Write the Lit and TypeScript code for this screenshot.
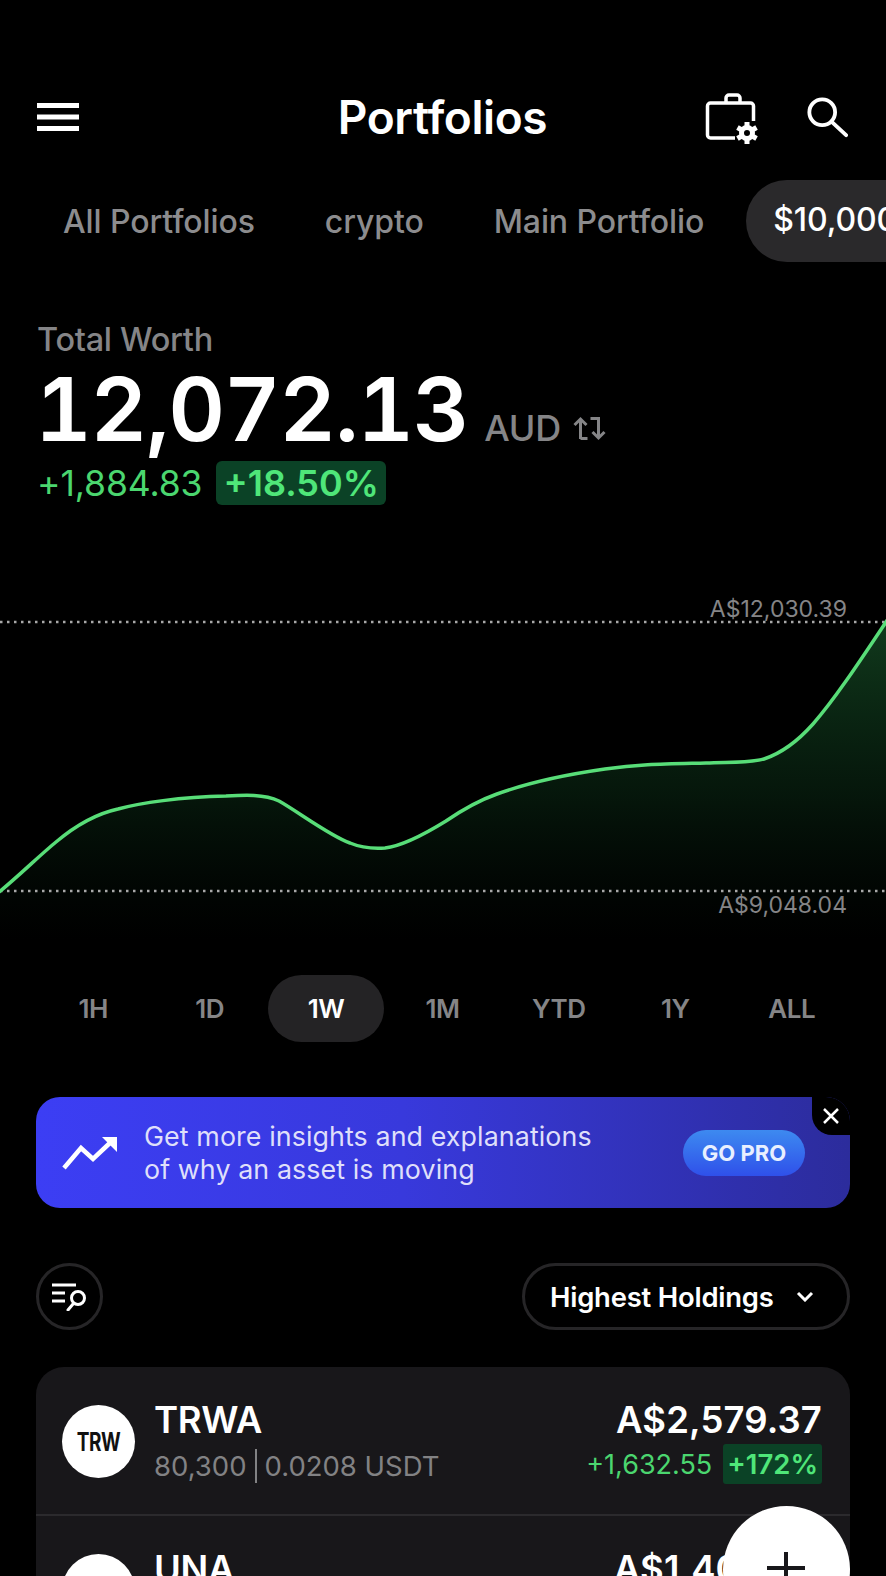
import { LitElement, html, css, svg } from "lit";
import { customElement } from "lit/decorators.js";

const CURVE = "M-2 892 C20 874 40 854 56 841 C75 825 95 813 118 808 C140 802 180 796 226 795 C245 794 264 793 279 800 C297 810 330 835 350 842 C362 847 372 848 385 847 C402 845 425 833 446 820 C465 807 480 799 497 793 C530 781 570 773 605 768 C640 763 665 763 706 762 C730 761 752 762 764 758 C782 752 797 741 813 723 C835 698 860 660 888 618";

@customElement("app-root")
export class AppRoot extends LitElement {
  static styles = css`
    :host { display: block; width: 886px; height: 1576px; overflow: hidden; background: #000; color: #fff; font-family: Inter, "Liberation Sans", sans-serif; position: relative; }
    .header { display: grid; grid-template-columns: 1fr auto 1fr; align-items: center; height: 74px; padding: 80px 38px 0 37px; }
    .title { font-size: 46px; font-weight: 600; letter-spacing: -0.4px; line-height: 74px; }
    .header-icons { display: flex; justify-content: flex-end; align-items: center; gap: 43px; }
    .bag { margin-top: 6px; }
    svg { display: block; }
    .tabs { display: flex; align-items: center; height: 82px; margin-top: 26px; padding-left: 63px; white-space: nowrap; overflow: hidden; font-size: 32px; font-weight: 500; letter-spacing: -0.1px; color: #8c8c8e; }
    .tabs span { margin-right: 70px; }
    .tabs .on { margin: 0 0 0 -28px; padding: 0 27px; height: 82px; line-height: 80px; border-radius: 41px; background: #2a292b; color: #fff; }
    .worth { padding: 60px 0 0 37px; }
    .worth-label { font-size: 32.5px; font-weight: 500; line-height: 36px; color: #858587; letter-spacing: -0.3px; }
    .worth-row { display: flex; align-items: baseline; height: 84px; padding-top: 9px; }
    .amount { margin-left: -2px; font-size: 88px; font-weight: 600; line-height: 84px; letter-spacing: -1.4px; font-variant-numeric: tabular-nums; }
    .cur { margin-left: 16px; font-size: 36px; font-weight: 500; color: #858587; letter-spacing: -0.2px; }
    .swap { margin-left: 11px; }
    .gain-row { display: flex; align-items: center; gap: 14px; margin-top: 10px; }
    .gain { font-size: 35.5px; color: #4bd66f; letter-spacing: -0.1px; }
    .badge { display: flex; align-items: center; height: 44px; padding: 0 7px; border-radius: 6px; background: #0b4226; font-size: 36px; font-weight: 600; color: #4fe679; }
    .chart { position: relative; height: 386px; margin-top: 84px; }
    .chart svg { position: absolute; left: 0; top: 0; }
    .chart-label { position: absolute; right: 39px; font-size: 23px; line-height: 26px; color: #858587; }
    .high { top: 7px; }
    .low { top: 303px; }
    .ranges { display: grid; grid-template-columns: repeat(7, 1fr); margin: 0 36px 0 35px; height: 67px; align-items: center; text-align: center; font-size: 26px; font-weight: 600; color: #858587; letter-spacing: -0.4px; }
    .ranges div { height: 67px; line-height: 67px; border-radius: 34px; }
    .ranges .on { background: #242325; color: #fff; }
    .banner { position: relative; display: flex; align-items: center; height: 111px; margin: 55px 36px 0; padding: 0 45px 0 26px; border-radius: 24px; background: linear-gradient(90deg, #3c3ef4 0%, #3839dc 45%, #2c2c9c 100%); overflow: hidden; }
    .banner-text { margin-left: 26px; flex: 1; font-size: 26.8px; line-height: 33px; color: #dfdffa; letter-spacing: 0.1px; }
    .go { width: 122px; height: 46px; line-height: 46px; text-align: center; border-radius: 23px; background: linear-gradient(180deg, #3d8af0, #2f50ea); font-size: 22px; font-weight: 700; color: #e8f0ff; }
    .close { position: absolute; right: 0; top: 0; width: 38px; height: 38px; border-bottom-left-radius: 20px; background: #000; display: flex; align-items: center; justify-content: center; }
    .controls { display: flex; justify-content: space-between; align-items: center; margin: 55px 36px 0; }
    .filter { width: 67px; height: 67px; box-sizing: border-box; border: 3px solid #262527; border-radius: 50%; display: flex; align-items: center; justify-content: center; }
    .sort { display: flex; align-items: center; height: 67px; box-sizing: border-box; width: 328px; padding-left: 25px; border: 3px solid #262527; border-radius: 34px; font-size: 27.4px; font-weight: 600; letter-spacing: -0.2px; gap: 22px; }
    .card { margin: 37px 36px 0; border-radius: 28px 28px 0 0; background: #18171a; height: 300px; }
    .row { display: flex; align-items: flex-start; height: 149px; padding: 38px 28px 0 26px; box-sizing: border-box; border-bottom: 2px solid #2b2a2d; }
    .row.last { border-bottom: 0; }
    .logo { width: 73px; height: 73px; border-radius: 50%; background: #fff; color: #111; display: flex; align-items: center; justify-content: center; font-size: 25px; font-weight: 700; flex: none; }
    .logo span { display: block; transform: scaleX(0.76); letter-spacing: -0.6px; }
    .info { margin-left: 19px; flex: 1; margin-top: -6px; }
    .sym { font-size: 36.5px; font-weight: 600; line-height: 42px; letter-spacing: -0.3px; }
    .sub { display: flex; align-items: center; margin-top: 7px; font-size: 27.5px; line-height: 36px; color: #828284; }
    .sep { width: 2px; height: 34px; margin: 0 8px; background: #828284; }
    .vals { text-align: right; margin-top: -6px; }
    .val { font-size: 36.5px; font-weight: 600; line-height: 42px; letter-spacing: 0.1px; }
    .chg { display: flex; justify-content: flex-end; align-items: center; gap: 11px; margin-top: 3px; }
    .chg-v { font-size: 27px; color: #4bd66f; }
    .chg-b { display: flex; align-items: center; height: 40px; padding: 0 4px; background: #0b4226; font-size: 27.5px; font-weight: 600; color: #4fe679; border-radius: 3px; }
    .fab { position: absolute; left: 723px; top: 1506px; width: 127px; height: 127px; border-radius: 50%; background: #fff; }
    .fab::before { content: ""; position: absolute; left: 44px; top: 60px; width: 38px; height: 4px; background: #18171a; }
    .fab::after { content: ""; position: absolute; left: 61px; top: 46px; width: 4px; height: 38px; background: #18171a; }
  `;

  private row(logo: string, sym: string, sub1: string, sub2: string, val: string, chg: string, pct: string, last = false) {
    return html`<div class="row ${last ? "last" : ""}">
      <div class="logo"><span>${logo}</span></div>
      <div class="info"><div class="sym">${sym}</div>
        <div class="sub"><span>${sub1}</span><i class="sep"></i><span>${sub2}</span></div></div>
      <div class="vals"><div class="val">${val}</div>
        <div class="chg"><span class="chg-v">${chg}</span><span class="chg-b">${pct}</span></div></div>
    </div>`;
  }

  render() {
    return html`
      <div class="header">
        <svg width="42" height="28" viewBox="0 0 42 28"><path d="M0 2.500h42M0 14h42M0 25.500h42" stroke="#fff" stroke-width="5"/></svg>
        <div class="title">Portfolios</div>
        <div class="header-icons">
          <svg class="bag" width="59" height="56" viewBox="-3 0 59 56" fill="none" stroke="#fff" stroke-width="3.500">
            <path d="M28 46H3.500a3 3 0 0 1-3-3V14a3 3 0 0 1 3-3h40a3 3 0 0 1 3 3V29"/>
            <path d="M19 11V6a3 3 0 0 1 3-3h8a3 3 0 0 1 3 3v5"/>
            <g transform="translate(40 41)">
              <circle r="5.500" stroke-width="5"/>
              ${[0, 60, 120, 180, 240, 300].map((a) => svg`<path d="M0 -6V-11" stroke-width="5" transform="rotate(${a})"/>`)}
            </g>
          </svg>
          <svg width="42" height="42" viewBox="0 0 44 44" fill="none" stroke="#fff" stroke-width="4" stroke-linecap="round"><circle cx="17" cy="17" r="13.500"/><path d="M27 27l15 14"/></svg>
        </div>
      </div>

      <div class="tabs"><span>All Portfolios</span><span>crypto</span><span>Main Portfolio</span><span class="on">$10,000 Portfolio</span></div>

      <div class="worth">
        <div class="worth-label">Total Worth</div>
        <div class="worth-row">
          <span class="amount">12,072.13</span><span class="cur">AUD</span>
          <svg class="swap" width="35" height="25" viewBox="0 0 34 25" fill="none" stroke="#858587" stroke-width="3"><path d="M8 23V3M2 9l6-6 6 6"/><path d="M8 22.500h7"/><path d="M18 2.500h8V22M20 16l6 6 6-6"/></svg>
        </div>
        <div class="gain-row"><span class="gain">+1,884.83</span><span class="badge">+18.50%</span></div>
      </div>

      <div class="chart">
        <svg width="886" height="386" viewBox="0 588 886 386">
          <defs><linearGradient id="f" x1="0" y1="0" x2="0" y2="1"><stop offset="0" stop-color="#1f6b35" stop-opacity=".55"/><stop offset=".55" stop-color="#124a24" stop-opacity=".3"/><stop offset="1" stop-color="#0a2a14" stop-opacity="0"/></linearGradient></defs>
          <path d="${CURVE} L888 940 L-2 940Z" fill="url(#f)"/>
          <path d="M0 621H886M0 890H886" stroke="#a8a8a8" stroke-width="2.500" stroke-dasharray="2.500 4.500"/>
          <path d="${CURVE}" fill="none" stroke="#58dd78" stroke-width="3.500"/>
        </svg>
        <div class="chart-label high">A$12,030.39</div>
        <div class="chart-label low">A$9,048.04</div>
      </div>

      <div class="ranges"><div>1H</div><div>1D</div><div class="on">1W</div><div>1M</div><div>YTD</div><div>1Y</div><div>ALL</div></div>

      <div class="banner">
        <svg width="56" height="34" viewBox="0 0 56 34" fill="none"><path d="M2 32L19 12l12 11L50 5" stroke="#fff" stroke-width="4.500"/><path d="M40 1h15v15z" fill="#fff"/></svg>
        <div class="banner-text">Get more insights and explanations<br/>of why an asset is moving</div>
        <div class="go">GO PRO</div>
        <div class="close"><svg width="18" height="18" viewBox="0 0 18 18"><path d="M2 2l14 14M16 2L2 16" stroke="#fff" stroke-width="2.500"/></svg></div>
      </div>

      <div class="controls">
        <div class="filter"><svg width="38" height="28" viewBox="0 0 38 28" fill="none" stroke="#fff" stroke-width="3"><path d="M1 2h24M1 10h13M1 18h13"/><circle cx="27" cy="15" r="6.500"/><path d="M22 21l-5 6" stroke-linecap="round"/></svg></div>
        <div class="sort">Highest Holdings<svg width="18" height="11" viewBox="0 0 18 11" fill="none" stroke="#fff" stroke-width="3"><path d="M2 2l7 7 7-7"/></svg></div>
      </div>

      <div class="card">
        ${this.row("TRW", "TRWA", "80,300", "0.0208 USDT", "A$2,579.37", "+1,632.55", "+172%")}
        ${this.row("UNA", "UNA", "1,000", "1.40 USDT", "A$1,400.00", "+100.00", "+8%", true)}
      </div>
      <div class="fab"></div>
    `;
  }
}
